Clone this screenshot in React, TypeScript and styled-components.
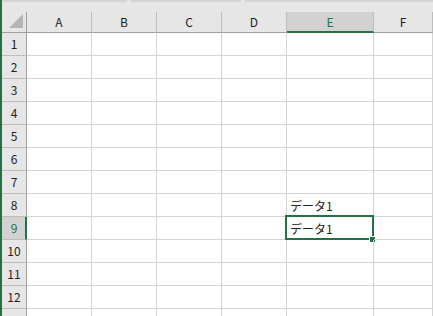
import React from 'react'
import styled, {createGlobalStyle} from 'styled-components'

const GREEN = '#217346'

const columns = ['A', 'B', 'C', 'D', 'E', 'F']
const rows = [1, 2, 3, 4, 5, 6, 7, 8, 9, 10, 11, 12, 13]

const selectedCol = 'E'
const selectedRow = 9

// cell contents, key = col + row
const data: Record<string, string> = {
    E8: 'データ1',
    E9: 'データ1',
}

const App: React.FC = () => {
    return (
        <>
            <GlobalStyle/>
            <Window>
                <LeftEdge/>
                <Main>
                    <TopStrip>
                        <Band style={{width: 124}}/>
                        <Band style={{width: 110}}/>
                        <Band style={{flex: 1}}/>
                    </TopStrip>
                    <Sheet>
                        <Corner>
                            <svg width="16" height="16" viewBox="0 0 16 16">
                                <polygon points="1,15 15,15 15,1" fill="#b5b5b5"/>
                            </svg>
                        </Corner>
                        {columns.map(c => (
                            <ColHeader key={c} $selected={c === selectedCol}>{c}</ColHeader>
                        ))}
                        {rows.map(r => (
                            <React.Fragment key={r}>
                                <RowHeader $selected={r === selectedRow}>{r}</RowHeader>
                                {columns.map(c => (
                                    <Cell key={c + r}>
                                        {data[c + r]}
                                        {c === selectedCol && r === selectedRow && (
                                            <Selection>
                                                <FillHandle/>
                                            </Selection>
                                        )}
                                    </Cell>
                                ))}
                            </React.Fragment>
                        ))}
                    </Sheet>
                </Main>
            </Window>
        </>
    )
}

export default App

const GlobalStyle = createGlobalStyle`
    html, body {
        margin: 0;
        padding: 0;
        background: #fff;
        overflow: hidden;
    }
    body {
        font-family: 'Noto Sans CJK JP', 'Noto Sans', sans-serif;
    }
`

const Window = styled.div`
    display: flex;
    width: 433px;
    height: 316px;
    overflow: hidden;
`

const LeftEdge = styled.div`
    width: 2px;
    flex-shrink: 0;
    background: ${GREEN};
`

const Main = styled.div`
    flex: 1;
    display: flex;
    flex-direction: column;
    min-width: 0;
`

const TopStrip = styled.div`
    height: 12px;
    flex-shrink: 0;
    display: flex;
    align-items: flex-start;
    gap: 4px;
    padding-left: 1px;
    background: #e6e6e6;
`

const Band = styled.div`
    height: 2px;
    background: #d4d4d4;
`

const Sheet = styled.div`
    display: grid;
    grid-template-columns: 25px 65px 65px 65px 65px 87px 1fr;
    grid-template-rows: 21px;
    grid-auto-rows: 23px;
`

const HeaderBase = styled.div`
    box-sizing: border-box;
    display: flex;
    align-items: center;
    justify-content: center;
    background: #e6e6e6;
    font-size: 12px;
    line-height: 1;
    color: #222;
`

const Corner = styled(HeaderBase)`
    justify-content: flex-end;
    align-items: flex-end;
    padding: 0 2px 3px 0;
    border-right: 1px solid #9f9f9f;
    border-bottom: 1px solid #9f9f9f;
`

const ColHeader = styled(HeaderBase)<{$selected: boolean}>`
    padding-top: ${p => p.$selected ? 1 : 0}px;
    background: ${p => p.$selected ? '#d2d2d2' : '#e6e6e6'};
    color: ${p => p.$selected ? GREEN : '#222'};
    border-right: 1px solid #bdbdbd;
    border-bottom: ${p => p.$selected ? `2px solid ${GREEN}` : '1px solid #9f9f9f'};
`

const RowHeader = styled(HeaderBase)<{$selected: boolean}>`
    background: ${p => p.$selected ? '#d2d2d2' : '#e6e6e6'};
    color: ${p => p.$selected ? GREEN : '#222'};
    border-right: ${p => p.$selected ? `2px solid ${GREEN}` : '1px solid #9f9f9f'};
    border-bottom: 1px solid #bdbdbd;
    padding-left: ${p => p.$selected ? 1 : 0}px;
`

const Cell = styled.div`
    position: relative;
    box-sizing: border-box;
    display: flex;
    align-items: center;
    padding: 1px 0 0 3px;
    border-right: 1px solid #d4d4d4;
    border-bottom: 1px solid #d4d4d4;
    font-size: 12px;
    line-height: 1;
    color: #222;
    white-space: nowrap;
`

const Selection = styled.div`
    position: absolute;
    top: -2px;
    left: -2px;
    right: -1px;
    bottom: -1px;
    border: 2px solid ${GREEN};
    pointer-events: none;
`

const FillHandle = styled.div`
    position: absolute;
    box-sizing: border-box;
    right: -4px;
    bottom: -5px;
    width: 7px;
    height: 7px;
    background: ${GREEN};
    border: 1px solid #fff;
`
